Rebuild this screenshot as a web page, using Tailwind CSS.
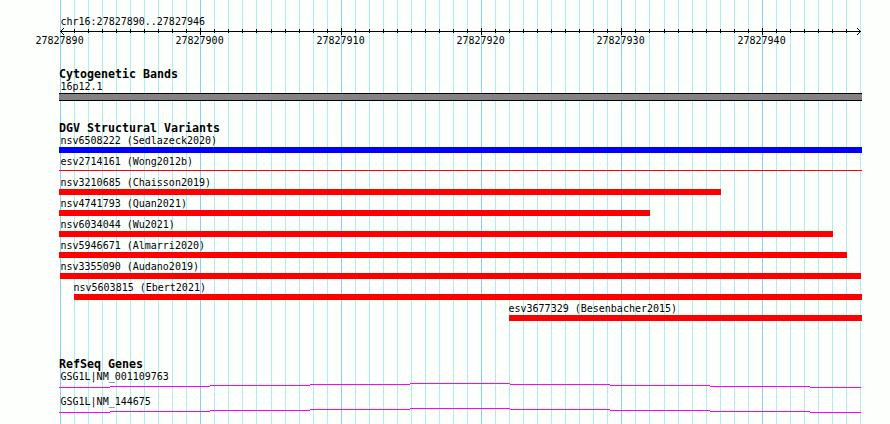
<!DOCTYPE html>
<html lang="en">
<head>
<meta charset="utf-8">
<title>chr16:27827890..27827946</title>
<script src="https://cdn.jsdelivr.net/npm/@tailwindcss/browser@4"></script>
</head>
<body class="bg-[#fdfffd]">
<main class="relative isolate flex h-[424px] w-[890px] flex-col overflow-hidden pl-[59px] font-['DejaVu_Sans_Mono',monospace] text-[10px] leading-[12px] whitespace-nowrap text-black">
  <!-- coordinate grid -->
  <svg class="absolute inset-0 -z-10" width="890" height="424" shape-rendering="crispEdges" fill="none">
    <path id="minor" stroke="#afeeee"/>
    <path id="major" stroke="#87cefa"/>
  </svg>

  <header class="flex h-[67px] flex-col pt-[16px]">
    <p class="h-[11px] pl-[1.5px]">chr16:27827890..27827946</p>
    <svg class="-ml-[59px] block h-[8px] w-[890px] shrink-0" viewBox="0 27 890 8" shape-rendering="crispEdges" fill="none" stroke="#000">
      <path d="M60 31.5H861"/>
      <path id="ticks"/>
      <path d="M61 30.5h1M62 29.5h1M63 28.5h1M61 32.5h1M62 33.5h1M63 34.5h1M859 30.5h1M858 29.5h1M857 28.5h1M859 32.5h1M858 33.5h1M857 34.5h1"/>
    </svg>
    <div class="-ml-[23.5px] flex h-[12px] shrink-0">
      <span class="w-[140px]">27827890</span><span class="w-[141px]">27827900</span><span class="w-[140px]">27827910</span><span class="w-[140px]">27827920</span><span class="w-[141px]">27827930</span><span>27827940</span>
    </div>
  </header>

  <section class="h-[54px]">
    <h2 class="h-[14px] text-[11.63px] leading-[14px] font-bold">Cytogenetic Bands</h2>
    <p class="h-[12px] pl-[1.5px]">16p12.1</p>
    <div class="h-[8px] w-[803px] border-y border-black bg-[#848284]"></div>
  </section>

  <section class="h-[236px]">
    <h2 class="h-[14px] text-[11.63px] leading-[14px] font-bold">DGV Structural Variants</h2>
    <div class="h-[21px]"><p class="h-[12px] pl-[1.5px]">nsv6508222 (Sedlazeck2020)</p><div class="h-[6px] w-[803px] bg-[#0000ff]"></div></div>
    <div class="h-[21px]"><p class="h-[14px] pl-[1.5px]">esv2714161 (Wong2012b)</p><div class="h-px w-[803px] bg-[#ff0000]"></div></div>
    <div class="h-[21px]"><p class="h-[12px] pl-[1.5px]">nsv3210685 (Chaisson2019)</p><div class="h-[6px] w-[662px] bg-[#ff0000]"></div></div>
    <div class="h-[21px]"><p class="h-[12px] pl-[1.5px]">nsv4741793 (Quan2021)</p><div class="h-[6px] w-[591px] bg-[#ff0000]"></div></div>
    <div class="h-[21px]"><p class="h-[12px] pl-[1.5px]">nsv6034044 (Wu2021)</p><div class="h-[6px] w-[774px] bg-[#ff0000]"></div></div>
    <div class="h-[21px]"><p class="h-[12px] pl-[1.5px]">nsv5946671 (Almarri2020)</p><div class="h-[6px] w-[788px] bg-[#ff0000]"></div></div>
    <div class="h-[21px]"><p class="h-[12px] pl-[1.5px]">nsv3355090 (Audano2019)</p><div class="ml-px h-[6px] w-[801px] bg-[#ff0000]"></div></div>
    <div class="h-[21px] pl-[15px]"><p class="-ml-[0.5px] h-[12px]">nsv5603815 (Ebert2021)</p><div class="h-[6px] w-[788px] bg-[#ff0000]"></div></div>
    <div class="h-[21px] pl-[450px]"><p class="-ml-[0.5px] h-[12px]">esv3677329 (Besenbacher2015)</p><div class="h-[6px] w-[353px] bg-[#ff0000]"></div></div>
  </section>

  <section>
    <h2 class="h-[14px] text-[11.63px] leading-[14px] font-bold">RefSeq Genes</h2>
    <div class="h-[25px]"><p class="h-[12px] pl-[1.5px]">GSG1L|NM_001109763</p>
      <svg class="block" width="803" height="5" shape-rendering="crispEdges" fill="none" stroke="#ff00ff"><path d="M0 4.5H51M51 3.5H151M151 2.5H251M251 1.5H351M351 .5H451M451 1.5H551M551 2.5H651M651 3.5H751M751 4.5H802"/></svg>
    </div>
    <div class="h-[25px]"><p class="h-[12px] pl-[1.5px]">GSG1L|NM_144675</p>
      <svg class="block" width="803" height="5" shape-rendering="crispEdges" fill="none" stroke="#ff00ff"><path d="M0 4.5H51M51 3.5H151M151 2.5H251M251 1.5H351M351 .5H451M451 1.5H551M551 2.5H651M651 3.5H751M751 4.5H802"/></svg>
    </div>
  </section>
</main>
<script>
  let minor = '', major = '', ticks = '';
  for (let i = 0; i <= 57; i++) {
    const x = Math.round(60 + i * 800 / 57) + 0.5;
    if (i % 10 === 0) {
      major += `M${x} 0V424`;
      if (i) ticks += `M${x} 28V35`;
    } else {
      minor += `M${x} 0V424`;
      if (i < 57) ticks += `M${x} 29V33`;
    }
  }
  document.getElementById('minor').setAttribute('d', minor);
  document.getElementById('major').setAttribute('d', major);
  document.getElementById('ticks').setAttribute('d', ticks);
</script>
</body>
</html>
